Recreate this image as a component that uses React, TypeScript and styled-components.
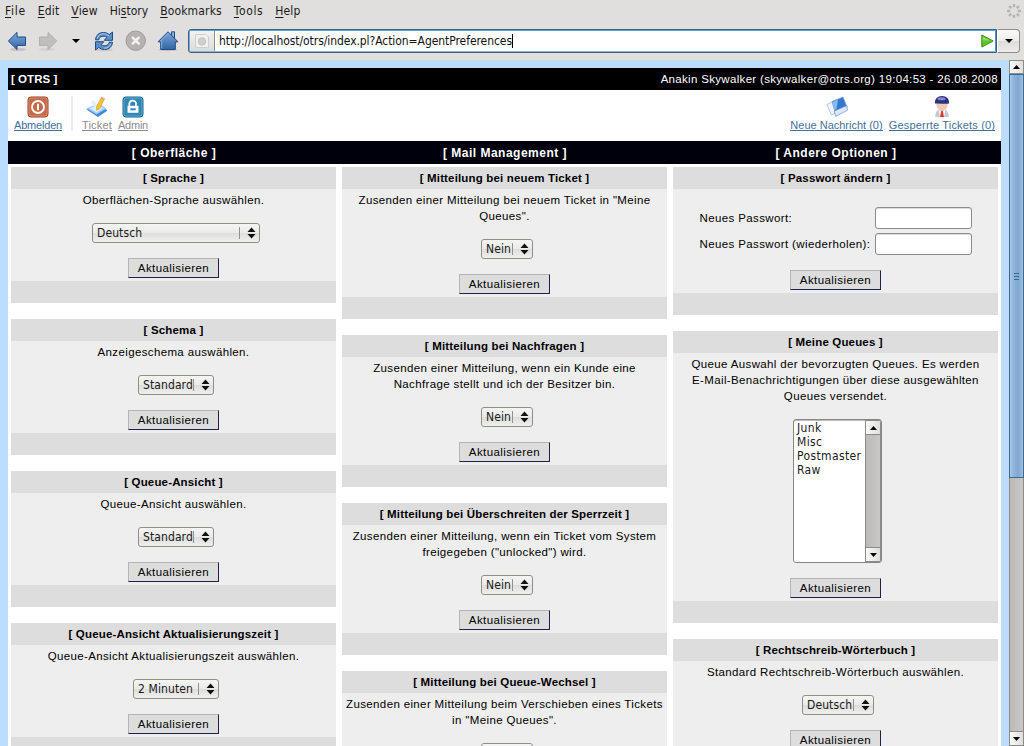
import React from 'react';
import styled, { createGlobalStyle } from 'styled-components';

const Global = createGlobalStyle`
  * { box-sizing: border-box; }
  html, body { margin: 0; height: 100%; overflow: hidden; }
  body { font-family: "Liberation Sans", Arial, sans-serif; font-size: 11px; color: #000; }
  svg { display: block; flex: none; }
`;

const uiFont = '"DejaVu Sans Condensed", "DejaVu Sans", sans-serif';

const Window = styled.div`
  display: flex;
  flex-direction: column;
  width: 1024px;
  height: 746px;
  overflow: hidden;
  background: #e0dfdd;
`;

/* ---------- browser chrome ---------- */

const MenuBar = styled.nav`
  display: flex;
  align-items: center;
  gap: 12px;
  height: 22px;
  padding: 0 2px 0 5px;
  font: 12px/22px ${uiFont};
  color: #1a1a1a;
`;

const MenuItem = styled.span<{ $tracking: number }>`
  letter-spacing: ${(p) => p.$tracking}px;
  white-space: nowrap;
  u { text-underline-offset: 2px; text-decoration-thickness: 1px; }
`;

const Spacer = styled.div`
  flex: 1;
`;

const ToolBar = styled.div`
  display: flex;
  align-items: center;
  height: 38px;
  padding-left: 6px;
`;

const ToolSlot = styled.span<{ $before?: number }>`
  margin-left: ${(p) => p.$before ?? 0}px;
`;

const AddressField = styled.div`
  display: flex;
  align-items: stretch;
  width: 809px;
  height: 24px;
  margin-left: 9px;
  border: 1px solid #3b6185;
  border-radius: 3px 0 0 3px;
  background: #fff;
  box-shadow: inset 0 1px 0 #5f9fd2, inset 0 -1px 0 #8bb4d8, inset 1px 0 0 #7aaad4, inset -1px 0 0 #4f8fca;
  padding: 1px;
`;

const PageBadge = styled.div`
  display: flex;
  align-items: center;
  justify-content: center;
  width: 25px;
  border-right: 1px solid #8f8f8e;
  background: linear-gradient(#f2f2f1, #dcdcda);
`;

const Address = styled.div`
  flex: 1;
  display: flex;
  align-items: center;
  padding-left: 4px;
  font: 12px/20px ${uiFont};
  letter-spacing: -0.065px;
  color: #111;
`;

const Caret = styled.i`
  width: 1px;
  height: 14px;
  background: #000;
`;

const GoIcon = styled.span`
  align-self: center;
  margin-right: 1px;
`;

const HistoryButton = styled.div`
  display: flex;
  align-items: center;
  justify-content: center;
  width: 23px;
  height: 24px;
  border: 1px solid #8c8c8a;
  border-left: 1px solid #fff;
  border-radius: 0 4px 4px 0;
  background: linear-gradient(#fafafa 0, #ececeb 48%, #dddcda 52%, #ececea 100%);
`;

/* ---------- page ---------- */

const Viewport = styled.div`
  flex: 1;
  display: flex;
  min-height: 0;
  background: #bbddff;
`;

const Page = styled.main`
  width: 993px;
  margin: 8px 8px 0;
  background: #fff;
  overflow: hidden;
`;

const TitleBar = styled.header`
  display: flex;
  justify-content: space-between;
  height: 22px;
  padding: 0 3px;
  background: #000;
  color: #fff;
  font-size: 11.5px;
  line-height: 22px;
  letter-spacing: 0.32px;
  b { letter-spacing: 0.05px; }
`;

const NavBar = styled.div`
  display: flex;
  height: 51px;
  padding: 6px 0 0 5px;
`;

const NavLink = styled.a<{ $tracking: number; $muted?: boolean; $width: number }>`
  display: flex;
  flex-direction: column;
  align-items: center;
  width: ${(p) => p.$width}px;
  white-space: nowrap;
  letter-spacing: ${(p) => p.$tracking}px;
  color: ${(p) => (p.$muted ? '#8c8c8c' : '#43709a')};
  span { margin-top: 1px; border-bottom: 1px solid currentColor; line-height: 12px; height: 12px; }
`;

const NavDivider = styled.div`
  width: 2px;
  height: 35px;
  margin: 0 9px 0 8px;
  background: #ececec;
`;

const Columns = styled.div`
  display: grid;
  grid-template-columns: repeat(3, 331px);
`;

const ColumnTitle = styled.h2`
  margin: 0;
  height: 23px;
  padding-left: 1px;
  background: #00000d;
  color: #fff;
  font-size: 12px;
  line-height: 24px;
  letter-spacing: 0.5px;
  text-align: center;
`;

const PanelStack = styled.div`
  display: flex;
  flex-direction: column;
  gap: 16px;
  padding: 3px;
`;

const PanelBox = styled.section`
  background: #eee;
`;

const PanelTitle = styled.h3`
  margin: 0;
  height: 22px;
  background: #ddd;
  font-size: 11.5px;
  line-height: 22px;
  letter-spacing: 0.16px;
  text-align: center;
`;

const PanelBody = styled.div`
  display: flex;
  flex-direction: column;
  align-items: center;
  gap: 15px;
  padding: 3px 0;
`;

const PanelFoot = styled.div`
  height: 22px;
  background: #ddd;
`;

const Description = styled.p`
  margin: 0;
  font-size: 11.5px;
  line-height: 16px;
  letter-spacing: 0.36px;
  text-align: center;
  white-space: pre-line;
`;

const UpdateButton = styled.button`
  width: 91px;
  height: 20px;
  padding: 0;
  border: 1px solid;
  border-color: #b4b4b4 #20204a #20204a #b4b4b4;
  background: #ddd;
  font: 11.5px/18px "Liberation Sans", Arial, sans-serif;
  letter-spacing: 0.42px;
  color: #000;
`;

const SelectBox = styled.div<{ $width: number }>`
  display: flex;
  align-items: center;
  width: ${(p) => p.$width}px;
  height: 20px;
  margin-left: 5px;
  padding: 0 3px 0 4px;
  border: 1px solid #8f8f8a;
  border-radius: 3px;
  background: linear-gradient(#f5f5f4 0, #ebebea 48%, #dededc 52%, #efefee 100%);
  font: 12px/18px ${uiFont};
  letter-spacing: 0.1px;
  color: #1a1a1a;
  white-space: nowrap;
`;

const SelectValue = styled.span`
  flex: 1;
  min-width: 0;
`;

const SelectRule = styled.i`
  width: 1px;
  height: 12px;
  margin-right: 7px;
  background: #91918f;
`;

const PasswordGrid = styled.div`
  display: grid;
  grid-template-columns: 175px 97px;
  row-gap: 4px;
  align-items: center;
  padding-top: 15px;
  font-size: 11.5px;
  letter-spacing: 0.38px;
`;

const PasswordInput = styled.input`
  width: 97px;
  height: 22px;
  border: 1px solid #8c8c88;
  border-radius: 3px;
  background: #fff;
  box-shadow: inset 0 1px 0 #dcdcdc;
`;

const ListBox = styled.div`
  display: flex;
  width: 89px;
  height: 144px;
  margin-left: 4px;
  border: 1px solid #868686;
  border-radius: 3px;
  background: #fff;
  box-shadow: inset 0 1px 0 #bdbdbd, inset -1px 0 0 #8b8b8b;
`;

const Options = styled.ul`
  flex: 1;
  margin: 0;
  padding: 1px 0 0 3px;
  list-style: none;
  font: 12px/14px ${uiFont};
  letter-spacing: 0.38px;
  color: #1a1a1a;
`;

const MiniTrack = styled.div`
  display: flex;
  flex-direction: column;
  justify-content: space-between;
  width: 15px;
  margin-right: 1px;
  border-left: 1px solid #8c8c8a;
  background: linear-gradient(90deg, #bcbab7, #cac8c6);
`;

const ArrowButton = styled.div<{ $size: number }>`
  display: flex;
  align-items: center;
  justify-content: center;
  height: ${(p) => p.$size}px;
  border: 1px solid #8c8c8a;
  border-width: 1px 0;
  background: linear-gradient(90deg, #fafafa, #dfdedc);
`;

const ScrollTrack = styled.aside`
  display: flex;
  flex-direction: column;
  width: 15px;
  border: 1px solid #8c8c8a;
  border-width: 0 1px;
  background: linear-gradient(90deg, #bcbab7, #c9c7c5);
`;

const ScrollThumb = styled.div`
  display: flex;
  flex-direction: column;
  align-items: center;
  justify-content: center;
  gap: 2px;
  height: 404px;
  margin: 0 -1px;
  border: 1px solid #3d6991;
  background: linear-gradient(90deg, #a9c9e6 0, #8fb6dc 25%, #7ea8d2 65%, #9cc1e4 100%);
  i { width: 5px; height: 1px; background: #3d6991; }
`;

/* ---------- drawings ---------- */

const Arrow = ({ up, w = 7 }: { up?: boolean; w?: number }) => (
  <svg width={w} height="4" viewBox="0 0 8 4" preserveAspectRatio="none">
    <path d={up ? 'M0 4 4 0 8 4Z' : 'M0 0 4 4 8 0Z'} fill="#000" />
  </svg>
);

const UpDown = () => (
  <svg width="9" height="12" viewBox="0 0 9 12">
    <path d="M.5 5 4.5 .6 8.5 5ZM.5 7 4.5 11.4 8.5 7Z" fill="#111" />
  </svg>
);

const BackIcon = () => (
  <svg width="22" height="22" viewBox="0 0 22 22">
    <defs>
      <linearGradient id="blue" x1="0" y1="0" x2="0" y2="1">
        <stop offset="0" stopColor="#7fa9d8" />
        <stop offset="1" stopColor="#2f66a6" />
      </linearGradient>
    </defs>
    <ellipse cx="12" cy="19.5" rx="8" ry="1.6" fill="#c6c5c3" />
    <path d="M2.3 11 11 2.4V7h8.500v8.400H11v4.200Z" fill="url(#blue)" stroke="#204a87" strokeLinejoin="round" />
  </svg>
);

const ForwardIcon = () => (
  <svg width="22" height="22" viewBox="0 0 22 22">
    <ellipse cx="10" cy="19.5" rx="8" ry="1.4" fill="#d2d1cf" />
    <path d="M19.700 11 11 2.400V7H2.500v8.400H11v4.200Z" fill="#bfbfbe" stroke="#aeaead" strokeLinejoin="round" />
  </svg>
);

const ReloadIcon = () => (
  <svg width="22" height="22" viewBox="0 0 22 22">
    <ellipse cx="11" cy="20" rx="9" ry="1.3" fill="#cbcac8" />
    <g fill="#5c8fc8" stroke="#204a87" strokeLinejoin="round">
      <path d="M2.5 9.800C3 5 6 2.500 10.500 2.500c2.300 0 4.300.8 5.700 2.100L19.500 2v8.300h-8.300l2.700-2.900C10.500 5 6.500 6.400 5.800 9.800Z" />
      <path d="M19.500 12.200C19 17 16 19.500 11.500 19.500c-2.300 0-4.300-.8-5.700-2.100L2.500 20v-8.300h8.300L8.100 14.600c3.400 2.400 7.400 1 8.100-2.400Z" />
    </g>
    <path d="M4.200 8.300C5.300 5 8 3.600 11 3.800c2 .1 3.600.9 5.200 2.200M17.800 13.700C16.700 17 14 18.400 11 18.200" fill="none" stroke="#b4d0ee" strokeWidth=".9" />
  </svg>
);

const StopIcon = () => (
  <svg width="22" height="22" viewBox="0 0 22 22">
    <circle cx="10.700" cy="10.700" r="9.700" fill="#b7b2b0" stroke="#a09b99" />
    <path d="M7.700 7.700l6 6M13.700 7.700l-6 6" stroke="#f4f3f2" strokeWidth="2.400" strokeLinecap="round" />
  </svg>
);

const HomeIcon = () => (
  <svg width="22" height="22" viewBox="0 0 22 22">
    <ellipse cx="11" cy="19.800" rx="9.500" ry="1.500" fill="#c6c5c3" />
    <path d="M14.500 6V1.800h3V9" fill="#8db4df" stroke="#204a87" />
    <path d="M11 1.800 1.500 11.300v.7h2.200v7.500h14.600V12h2.200v-.7Z" fill="url(#blue)" stroke="#204a87" strokeLinejoin="round" />
    <path d="M11 3.300 3.500 11h1.200v7.500" fill="none" stroke="#9dc0e6" strokeWidth=".8" />
  </svg>
);

const BlankPageIcon = () => (
  <svg width="16" height="16" viewBox="0 0 16 16">
    <path d="M1.500 1.500h10.500l2.500 2.500v10.500h-13Z" fill="#f1f1f0" stroke="#cfcfcd" />
    <circle cx="8" cy="8.500" r="3.800" fill="#cfcfce" stroke="#bdbdbc" strokeWidth=".8" />
  </svg>
);

const PlayIcon = () => (
  <svg width="13" height="14" viewBox="0 0 13 14">
    <path d="M.8 1 12.200 7 .8 13Z" fill="#62c02f" stroke="#3c9312" strokeLinejoin="round" />
    <path d="M1.800 2.700 9.500 6.500H1.800Z" fill="#8ddb5c" />
  </svg>
);

const Throbber = () => (
  <svg width="16" height="16" viewBox="-8 -8 16 16">
    {[0, 45, 90, 135, 180, 225, 270, 315].map((a) => (
      <rect key={a} x="-1.200" y="-7" width="2.400" height="3.200" rx=".8" fill="#b4b3b1" transform={`rotate(${a})`} />
    ))}
  </svg>
);

const LogoutIcon = () => (
  <svg width="22" height="22" viewBox="0 0 22 22">
    <rect x="1" y="1" width="20" height="20" rx="2.800" fill="#c4694a" stroke="#9c3f22" />
    <rect x="2" y="2" width="18" height="18" rx="2" fill="none" stroke="#dc9d86" strokeWidth=".7" />
    <circle cx="11" cy="11" r="6" fill="none" stroke="#fff" strokeWidth="1.900" />
    <path d="M11 7.700v6.600" stroke="#fff" strokeWidth="2" />
  </svg>
);

const LockIcon = () => (
  <svg width="22" height="22" viewBox="0 0 22 22">
    <rect x="1" y="1" width="20" height="20" rx="2.800" fill="#3187b4" stroke="#166590" />
    <rect x="2" y="2" width="18" height="18" rx="2" fill="none" stroke="#78b7d6" strokeWidth=".7" />
    <path d="M7.300 10V7.500A3.500 3.500 0 0 1 14 6.800V10" fill="none" stroke="#fff" strokeWidth="1.700" />
    <path d="M5.500 9.800h11v7h-11Z" fill="#fff" />
    <path d="M8.300 12.300h5.400v2H8.300Z" fill="#3187b4" />
  </svg>
);

const TicketIcon = () => (
  <svg width="22" height="22" viewBox="0 0 22 22">
    <path d="M.5 13.500 13.500 9l8 5.500L12 21Z" fill="#3c86dc" />
    <path d="M.5 12.300 13 7.500l7.500 5L10.500 18.500Z" fill="#9dcbf8" />
    <path d="M3.500 12.300 12.500 9l4.800 3.200-6.800 4.200Z" fill="#dcefff" />
    <path d="M4.500 6.500 8 4l4 6-3 1.500Z" fill="#e5effa" />
    <path d="M15.500 1.200l3 1.500-4.700 9.800-3.300 1.700.2-3.500Z" fill="#fcc52d" stroke="#dc8c16" strokeWidth=".6" />
    <path d="M15.500 1.200l3 1.500-.8 1.600-3-1.400Z" fill="#f4a28e" />
  </svg>
);

const MessageIcon = () => (
  <svg width="22" height="22" viewBox="0 0 22 22">
    <path d="M.8 8.500 11 3.500l3 11L5.500 19Z" fill="#eef4fb" stroke="#9eb5d2" strokeWidth=".7" />
    <path d="M6 5.500 17 1l4.200 10.300L9.500 17.500Z" fill="#3478ce" stroke="#7da4d5" strokeWidth=".7" />
    <path d="M6.500 6 12 3.500l-1.500 9.500-2 1Z" fill="#85bbf2" />
    <path d="M8.300 15 20.800 9.600l.7 4.600L9.700 20.500Z" fill="#dae9fa" stroke="#5484bd" strokeWidth=".6" />
  </svg>
);

const UserIcon = () => (
  <svg width="22" height="22" viewBox="0 0 22 22">
    <path d="M4.200 21c0-5 2.200-8.300 6.800-8.300s6.800 3.300 6.800 8.300Z" fill="#c9c9d0" />
    <path d="M7.500 13.500 11 16l3.500-2.500L13 21H9Z" fill="#f7f7f9" />
    <path d="M10.200 15h1.600l1.200 6H9Z" fill="#e23a28" />
    <path d="M5.500 6h11v3c0 3.300-2.400 5.300-5.500 5.300S5.500 12.300 5.500 9Z" fill="#f3cbb3" />
    <path d="M4 7.500C3.600 2.800 6.500 0 11 0s7.500 2.800 7 7.500C12.500 8.300 9 7 4 7.500Z" fill="#2c3184" />
    <ellipse cx="10.500" cy="2.800" rx="4" ry="1.500" fill="#858bc7" />
  </svg>
);

/* ---------- composition ---------- */

type MenuEntry = { pre?: string; key: string; post: string; tracking: number };
const menu: MenuEntry[] = [
  { key: 'F', post: 'ile', tracking: 0.7 },
  { key: 'E', post: 'dit', tracking: 0.15 },
  { key: 'V', post: 'iew', tracking: 0.2 },
  { pre: 'Hi', key: 's', post: 'tory', tracking: 0 },
  { key: 'B', post: 'ookmarks', tracking: 0.15 },
  { key: 'T', post: 'ools', tracking: 0.6 },
  { key: 'H', post: 'elp', tracking: 0.15 },
];

const Select = ({ width, value }: { width: number; value: string }) => (
  <SelectBox $width={width}>
    <SelectValue>{value}</SelectValue>
    <SelectRule />
    <UpDown />
  </SelectBox>
);

const Panel = ({ title, text, children }: { title: string; text?: string; children: React.ReactNode }) => (
  <PanelBox>
    <PanelTitle>[ {title} ]</PanelTitle>
    <PanelBody>
      {text && <Description>{text}</Description>}
      {children}
      <UpdateButton>Aktualisieren</UpdateButton>
    </PanelBody>
    <PanelFoot />
  </PanelBox>
);

export default function App() {
  return (
    <Window>
      <Global />
      <MenuBar>
        {menu.map((m) => (
          <MenuItem key={m.key} $tracking={m.tracking}>
            {m.pre}
            <u>{m.key}</u>
            {m.post}
          </MenuItem>
        ))}
        <Spacer />
        <Throbber />
      </MenuBar>
      <ToolBar>
        <ToolSlot><BackIcon /></ToolSlot>
        <ToolSlot $before={9}><ForwardIcon /></ToolSlot>
        <ToolSlot $before={13}><Arrow w={8} /></ToolSlot>
        <ToolSlot $before={13}><ReloadIcon /></ToolSlot>
        <ToolSlot $before={10}><StopIcon /></ToolSlot>
        <ToolSlot $before={10}><HomeIcon /></ToolSlot>
        <AddressField>
          <PageBadge><BlankPageIcon /></PageBadge>
          <Address>
            http://localhost/otrs/index.pl?Action=AgentPreferences
            <Caret />
          </Address>
          <GoIcon><PlayIcon /></GoIcon>
        </AddressField>
        <HistoryButton><Arrow w={8} /></HistoryButton>
      </ToolBar>

      <Viewport>
        <Page>
          <TitleBar>
            <b>[ OTRS ]</b>
            <span>Anakin Skywalker (skywalker@otrs.org) 19:04:53 - 26.08.2008</span>
          </TitleBar>
          <NavBar>
            <NavLink $width={50} $tracking={-0.2}><LogoutIcon /><span>Abmelden</span></NavLink>
            <NavDivider />
            <NavLink $width={30} $tracking={0.2} $muted><TicketIcon /><span>Ticket</span></NavLink>
            <NavLink $width={42} $tracking={-0.25} $muted><LockIcon /><span>Admin</span></NavLink>
            <Spacer />
            <NavLink $width={93} $tracking={0}><MessageIcon /><span>Neue Nachricht (0)</span></NavLink>
            <NavLink $width={118} $tracking={0.17}><UserIcon /><span>Gesperrte Tickets (0)</span></NavLink>
          </NavBar>

          <Columns>
            <div>
              <ColumnTitle>[ Oberfläche ]</ColumnTitle>
              <PanelStack>
                <Panel title="Sprache" text="Oberflächen-Sprache auswählen.">
                  <Select width={168} value="Deutsch" />
                </Panel>
                <Panel title="Schema" text="Anzeigeschema auswählen.">
                  <Select width={76} value="Standard" />
                </Panel>
                <Panel title="Queue-Ansicht" text="Queue-Ansicht auswählen.">
                  <Select width={76} value="Standard" />
                </Panel>
                <Panel title="Queue-Ansicht Aktualisierungszeit" text="Queue-Ansicht Aktualisierungszeit auswählen.">
                  <Select width={86} value="2 Minuten" />
                </Panel>
              </PanelStack>
            </div>
            <div>
              <ColumnTitle>[ Mail Management ]</ColumnTitle>
              <PanelStack>
                <Panel title="Mitteilung bei neuem Ticket" text={'Zusenden einer Mitteilung bei neuem Ticket in "Meine\nQueues".'}>
                  <Select width={52} value="Nein" />
                </Panel>
                <Panel title="Mitteilung bei Nachfragen" text={'Zusenden einer Mitteilung, wenn ein Kunde eine\nNachfrage stellt und ich der Besitzer bin.'}>
                  <Select width={52} value="Nein" />
                </Panel>
                <Panel title="Mitteilung bei Überschreiten der Sperrzeit" text={'Zusenden einer Mitteilung, wenn ein Ticket vom System\nfreigegeben ("unlocked") wird.'}>
                  <Select width={52} value="Nein" />
                </Panel>
                <Panel title="Mitteilung bei Queue-Wechsel" text={'Zusenden einer Mitteilung beim Verschieben eines Tickets\nin "Meine Queues".'}>
                  <Select width={52} value="Nein" />
                </Panel>
              </PanelStack>
            </div>
            <div>
              <ColumnTitle>[ Andere Optionen ]</ColumnTitle>
              <PanelStack>
                <Panel title="Passwort ändern">
                  <PasswordGrid>
                    <label>Neues Passwort:</label>
                    <PasswordInput type="password" />
                    <label>Neues Passwort (wiederholen):</label>
                    <PasswordInput type="password" />
                  </PasswordGrid>
                </Panel>
                <Panel title="Meine Queues" text={'Queue Auswahl der bevorzugten Queues. Es werden\nE-Mail-Benachrichtigungen über diese ausgewählten\nQueues versendet.'}>
                  <ListBox>
                    <Options>
                      <li>Junk</li>
                      <li>Misc</li>
                      <li>Postmaster</li>
                      <li>Raw</li>
                    </Options>
                    <MiniTrack>
                      <ArrowButton $size={15}><Arrow up /></ArrowButton>
                      <ArrowButton $size={15}><Arrow /></ArrowButton>
                    </MiniTrack>
                  </ListBox>
                </Panel>
                <Panel title="Rechtschreib-Wörterbuch" text="Standard Rechtschreib-Wörterbuch auswählen.">
                  <Select width={72} value="Deutsch" />
                </Panel>
              </PanelStack>
            </div>
          </Columns>
        </Page>
        <ScrollTrack>
          <ArrowButton $size={14}><Arrow up /></ArrowButton>
          <ScrollThumb><i /><i /><i /></ScrollThumb>
          <Spacer />
          <ArrowButton $size={15}><Arrow /></ArrowButton>
        </ScrollTrack>
      </Viewport>
    </Window>
  );
}
